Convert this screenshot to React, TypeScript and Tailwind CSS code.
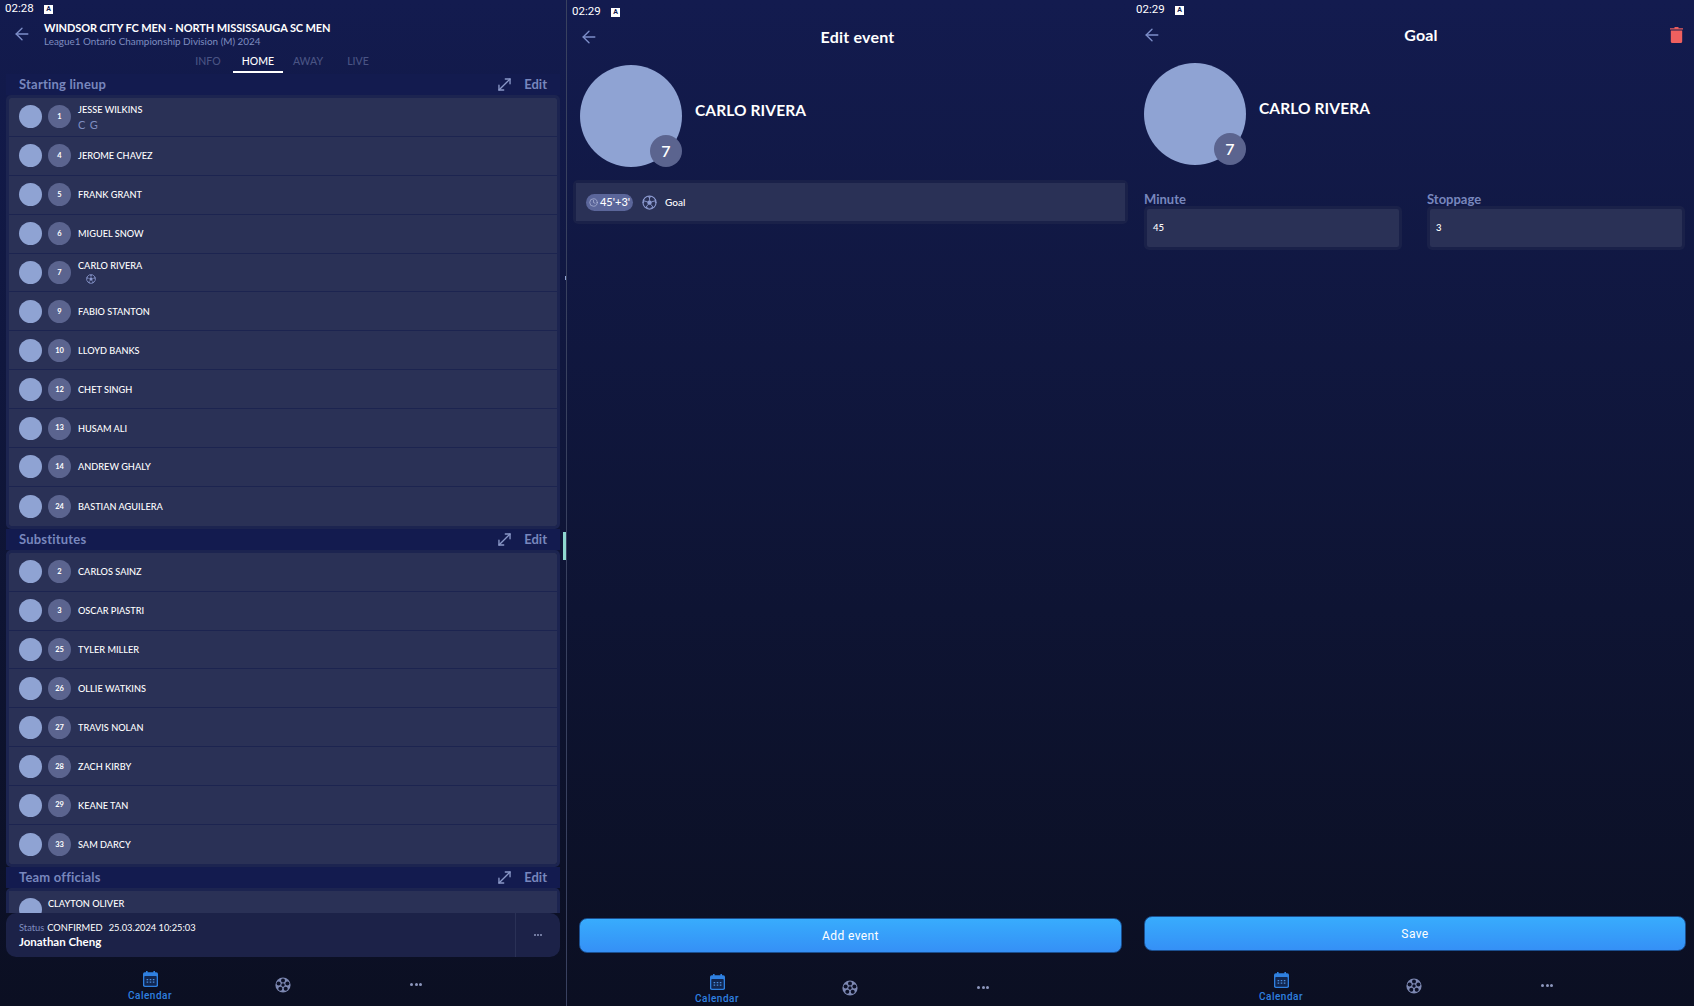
import { ArrowLeft, Clock, MoveDiagonal } from "lucide-react";

const startingLineup = [
  { no: 1, name: "JESSE WILKINS", tag: "C G" },
  { no: 4, name: "JEROME CHAVEZ" },
  { no: 5, name: "FRANK GRANT" },
  { no: 6, name: "MIGUEL SNOW" },
  { no: 7, name: "CARLO RIVERA", ball: true },
  { no: 9, name: "FABIO STANTON" },
  { no: 10, name: "LLOYD BANKS" },
  { no: 12, name: "CHET SINGH" },
  { no: 13, name: "HUSAM ALI" },
  { no: 14, name: "ANDREW GHALY" },
  { no: 24, name: "BASTIAN AGUILERA" },
];

const substitutes = [
  { no: 2, name: "CARLOS SAINZ" },
  { no: 3, name: "OSCAR PIASTRI" },
  { no: 25, name: "TYLER MILLER" },
  { no: 26, name: "OLLIE WATKINS" },
  { no: 27, name: "TRAVIS NOLAN" },
  { no: 28, name: "ZACH KIRBY" },
  { no: 29, name: "KEANE TAN" },
  { no: 33, name: "SAM DARCY" },
];

function FootballIcon({ className }: { className?: string }) {
  return (
    <svg viewBox="0 0 16 16" className={className}>
      <circle cx="8" cy="8" r="7" fill="none" stroke="#8c9ad0" strokeWidth="1.2" />
      <path d="M8 5.2l2.7 2-1 3.1H6.3l-1-3.1z" fill="#8c9ad0" />
      <path
        d="M8 5.2V1.6M10.7 7.2l3.5-1.1M9.7 10.3l2.1 2.9M6.3 10.3l-2.1 2.9M5.3 7.2L1.8 6.1"
        stroke="#8c9ad0"
        strokeWidth="1"
      />
      <path d="M6 1.3L8 2.6l2-1.3M14.4 4.6l-.2 2.8 1 1M1.6 4.6l.2 2.8-1 1M4 13.2l2.6.9M12 13.2l-2.6.9" fill="none" stroke="#8c9ad0" strokeWidth="1.1" />
    </svg>
  );
}

function ReelIcon() {
  return (
    <svg viewBox="0 0 16 16" className="h-[16px] w-[16px]">
      <circle cx="8" cy="8" r="7.6" fill="#7d88b2" />
      <circle cx="8" cy="8" r="1.7" fill="#0c1026" />
      <circle cx="8" cy="3.4" r="2" fill="#0c1026" />
      <circle cx="12.4" cy="6.6" r="2" fill="#0c1026" />
      <circle cx="10.7" cy="11.8" r="2" fill="#0c1026" />
      <circle cx="5.3" cy="11.8" r="2" fill="#0c1026" />
      <circle cx="3.6" cy="6.6" r="2" fill="#0c1026" />
    </svg>
  );
}

function CalendarIcon() {
  return (
    <svg viewBox="0 0 15 16" className="h-[16px] w-[15px]">
      <path d="M3 0h1.6v2H3zM10.4 0H12v2h-1.6z" fill="#2f80e0" />
      <rect x="0" y="1.2" width="15" height="14.8" rx="1.8" fill="#2f80e0" />
      <rect x="1.3" y="5" width="12.4" height="9.7" rx="0.8" fill="#12264f" />
      <path d="M3.6 8h1.6v1.2H3.6zM6.7 8h1.6v1.2H6.7zM9.8 8h1.6v1.2H9.8zM3.6 10.6h1.6v1.2H3.6zM6.7 10.6h1.6v1.2H6.7zM9.8 10.6h1.6v1.2H9.8z" fill="#4b8fe0" />
    </svg>
  );
}

function TrashIcon() {
  return (
    <svg viewBox="0 0 13 16" className="h-[16px] w-[13px]">
      <path d="M4.5 0h4v1.2h4.5v1.4H0V1.2h4.5z" fill="#e85d5d" />
      <path d="M.8 3.6h11.4v10.8a1.6 1.6 0 0 1-1.6 1.6H2.4a1.6 1.6 0 0 1-1.6-1.6z" fill="#f0605f" />
    </svg>
  );
}

function StatusBar({ time, className }: { time: string; className: string }) {
  return (
    <div className={`flex shrink-0 items-center font-['Roboto',sans-serif] ${className}`}>
      <span className="w-[39px] text-[11.5px] leading-none text-white">{time}</span>
      <span className="flex h-[9px] w-[9px] items-center justify-center bg-white text-[7px] font-bold leading-none text-[#131b4f]">
        A
      </span>
    </div>
  );
}

function BottomNav({ className }: { className: string }) {
  return (
    <div className={`flex shrink-0 items-start justify-center font-['Roboto',sans-serif] ${className}`}>
      <div className="flex w-[133px] flex-col items-center">
        <CalendarIcon />
        <span className="mt-[2px] text-[10px] font-medium leading-[14px] tracking-[0.5px] text-[#2f80e0]">Calendar</span>
      </div>
      <div className="mt-[6px] flex w-[133px] justify-center">
        <ReelIcon />
      </div>
      <div className="mt-[12px] flex w-[133px] justify-center gap-[1.5px]">
        <span className="h-[3px] w-[3px] rounded-full bg-[#8d97bd]" />
        <span className="h-[3px] w-[3px] rounded-full bg-[#8d97bd]" />
        <span className="h-[3px] w-[3px] rounded-full bg-[#8d97bd]" />
      </div>
    </div>
  );
}

function SectionHeader({ title }: { title: string }) {
  return (
    <div className="mx-[6px] flex h-[21px] shrink-0 items-center justify-between bg-[#131b4f] pl-[13px] pr-[13px] text-[13px] font-bold leading-none text-[#7887bd]">
      <span className="tracking-[0.2px]">{title}</span>
      <div className="flex items-center gap-[10px]">
        <MoveDiagonal size={19} strokeWidth={1.7} className="text-[#8a98c8]" />
        <span>Edit</span>
      </div>
    </div>
  );
}

function PlayerRow({ no, name, tag, ball }: { no: number; name: string; tag?: string; ball?: boolean }) {
  return (
    <div className="flex h-[38.9px] items-center border-b border-[#1c2450] bg-[#2a3156] pl-[10px] last:border-b-0">
      <div className="h-[23px] w-[23px] rounded-full bg-[#8fa3d3]" />
      <div className="ml-[6px] flex h-[23px] w-[23px] items-center justify-center rounded-full bg-[#5b648f] text-[7.5px] font-bold text-white">
        {no}
      </div>
      <div className="ml-[7px] flex flex-col pt-[1px] text-[9.2px] font-medium leading-[12px] text-white">
        <span>{name}</span>
        {tag && <span className="mt-[2px] text-[11px] font-normal leading-[13px] tracking-[0.8px] text-[#7f8dc0]">{tag}</span>}
        {ball && <FootballIcon className="mb-[3px] ml-[8px] mt-[2px] h-[10px] w-[10px]" />}
      </div>
    </div>
  );
}

function PlayerList({ players }: { players: { no: number; name: string; tag?: string; ball?: boolean }[] }) {
  return (
    <div className="mx-[6px] shrink-0 overflow-hidden rounded-[5px] border-[3px] border-[#1c2450]">
      {players.map((p) => (
        <PlayerRow key={p.no} {...p} />
      ))}
    </div>
  );
}

function Profile({ className }: { className: string }) {
  return (
    <div className={`flex items-center ${className}`}>
      <div className="relative h-[102px] w-[102px] shrink-0 rounded-full bg-[#8fa3d3]">
        <div className="absolute bottom-0 right-0 flex h-[32px] w-[32px] items-center justify-center rounded-full bg-[#5b648f] text-[16px] font-semibold text-white">
          7
        </div>
      </div>
      <span className="mb-[10px] ml-[13px] text-[15.5px] font-bold tracking-[0.1px] text-white">CARLO RIVERA</span>
    </div>
  );
}

function TimeField({ label, value }: { label: string; value: string }) {
  return (
    <div className="flex w-[258px] flex-col">
      <span className="h-[17px] text-[13px] font-bold leading-[20px] text-[#7887bd]">{label}</span>
      <div className="h-[44px] rounded-[5px] border-[3px] border-[#1a2149] bg-[#2a3156] pl-[6px] text-[9.5px] font-medium leading-[38px] text-white">
        {value}
      </div>
    </div>
  );
}

function ActionButton({ label, className }: { label: string; className: string }) {
  return (
    <div
      className={`flex h-[35px] shrink-0 items-center justify-center rounded-[8px] border border-[#1b4f8f] bg-linear-to-b from-[#38acfd] to-[#3590f6] font-['Roboto',sans-serif] text-[12px] tracking-[0.4px] text-white ${className}`}
    >
      {label}
    </div>
  );
}

export default function App() {
  return (
    <div className="flex h-screen w-[1694px] overflow-hidden font-['Lato',sans-serif]">
      {/* match lineup */}
      <div className="relative flex h-full w-[566px] shrink-0 flex-col bg-linear-to-b from-[#131b4f] to-[#0b0f22]">
        <StatusBar time="02:28" className="h-[17px] pl-[5px] pt-[1px]" />
        <div className="flex h-[33px] shrink-0 items-center">
          <div className="flex w-[44px] justify-center">
            <ArrowLeft size={20} strokeWidth={1.6} className="text-[#7e8fca]" />
          </div>
          <div className="flex flex-col">
            <span className="text-[11px] font-bold leading-[14px] tracking-[-0.1px] text-white">
              WINDSOR CITY FC MEN - NORTH MISSISSAUGA SC MEN
            </span>
            <span className="text-[9.9px] leading-[12px] text-[#7f8dc0]">
              League1 Ontario Championship Division (M) 2024
            </span>
          </div>
        </div>
        <div className="flex h-[23px] shrink-0 justify-center text-[10.5px] font-medium leading-[23px]">
          <span className="w-[50px] text-center text-[#4a5484]">INFO</span>
          <span className="w-[50px] border-b-2 border-white text-center text-white">HOME</span>
          <span className="w-[50px] text-center text-[#4a5484]">AWAY</span>
          <span className="w-[50px] text-center text-[#4a5484]">LIVE</span>
        </div>
        <div className="mt-[1px] flex min-h-0 flex-1 flex-col overflow-hidden">
          <SectionHeader title="Starting lineup" />
          <PlayerList players={startingLineup} />
          <SectionHeader title="Substitutes" />
          <PlayerList players={substitutes} />
          <SectionHeader title="Team officials" />
          <div className="mx-[6px] shrink-0 rounded-[5px] border-[3px] border-[#1c2450]">
            <div className="flex h-[39px] items-start bg-[#2a3156] pl-[10px] pt-[7px]">
              <div className="h-[23px] w-[23px] rounded-full bg-[#8fa3d3]" />
              <span className="ml-[6px] text-[9.2px] font-medium leading-[12px] text-white">CLAYTON OLIVER</span>
            </div>
          </div>
        </div>
        <div className="mx-[6px] flex h-[44px] shrink-0 rounded-[10px] bg-[#1c2248]">
          <div className="flex flex-1 flex-col justify-center pl-[13px]">
            <div className="flex text-[9.3px] leading-[13px] text-white">
              <span className="mr-[3px] text-[#7f8dc0]">Status</span>
              <span>CONFIRMED</span>
              <span className="ml-[6px]">25.03.2024 10:25:03</span>
            </div>
            <span className="mt-[1px] text-[11.5px] font-bold leading-[14px] text-white">Jonathan Cheng</span>
          </div>
          <div className="flex w-[45px] items-center justify-center gap-[1px] border-l border-[#2a3156]">
            <span className="h-[2px] w-[2px] rounded-full bg-[#8d97bd]" />
            <span className="h-[2px] w-[2px] rounded-full bg-[#8d97bd]" />
            <span className="h-[2px] w-[2px] rounded-full bg-[#8d97bd]" />
          </div>
        </div>
        <BottomNav className="h-[49px] pt-[14px]" />
        <div className="absolute right-0 top-[532px] h-[28px] w-[3px] bg-[#8fd8cf]" />
        <div className="absolute right-0 top-[276px] h-[4px] w-[1px] bg-[#8fa3d3]" />
      </div>

      {/* edit event */}
      <div className="flex h-full w-[564px] shrink-0 flex-col border-l border-[#39415f] bg-linear-to-b from-[#131b4f] to-[#0b0f22]">
        <StatusBar time="02:29" className="h-[24px] pl-[5px]" />
        <div className="flex h-[26px] shrink-0 items-center">
          <div className="flex w-[44px] justify-center">
            <ArrowLeft size={20} strokeWidth={1.6} className="text-[#7e8fca]" />
          </div>
          <span className="flex-1 text-center text-[16px] font-bold tracking-[0.2px] text-white">Edit event</span>
          <div className="w-[26px]" />
        </div>
        <Profile className="ml-[13px] mt-[15px]" />
        <div className="ml-[6px] mr-[2px] mt-[13px] h-[44px] rounded-[5px] border-[3px] border-[#1a2149]">
          <div className="flex h-full items-center bg-[#2a3156] pl-[10px]">
            <div className="flex h-[17px] w-[47px] items-center justify-center gap-[2px] rounded-full bg-[#5b669a] text-[11px] font-medium text-white">
              <Clock size={9} strokeWidth={1.5} className="text-[#c5cce8]" />
              <span>45'+3'</span>
            </div>
            <FootballIcon className="ml-[9px] h-[15px] w-[15px]" />
            <span className="ml-[8px] text-[10px] font-medium text-white">Goal</span>
          </div>
        </div>
        <div className="flex-1" />
        <ActionButton label="Add event" className="ml-[12px] mr-[8px]" />
        <BottomNav className="h-[53px] pl-[3px] pt-[21px]" />
      </div>

      {/* goal */}
      <div className="flex h-full w-[564px] shrink-0 flex-col bg-linear-to-b from-[#131b4f] to-[#0b0f22]">
        <StatusBar time="02:29" className="h-[20px] pl-[6px]" />
        <div className="mt-[2px] flex h-[26px] shrink-0 items-center">
          <div className="flex w-[44px] justify-center">
            <ArrowLeft size={20} strokeWidth={1.6} className="text-[#7e8fca]" />
          </div>
          <span className="flex-1 text-center text-[16px] font-bold tracking-[0.2px] text-white">Goal</span>
          <div className="flex w-[26px] pl-[2px]">
            <TrashIcon />
          </div>
        </div>
        <Profile className="ml-[14px] mt-[15px]" />
        <div className="ml-[14px] mt-[24px] flex gap-[25px]">
          <TimeField label="Minute" value="45" />
          <TimeField label="Stoppage" value="3" />
        </div>
        <div className="flex-1" />
        <ActionButton label="Save" className="ml-[14px] mr-[8px]" />
        <BottomNav className="h-[55px] pl-[4px] pt-[21px]" />
      </div>
    </div>
  );
}
